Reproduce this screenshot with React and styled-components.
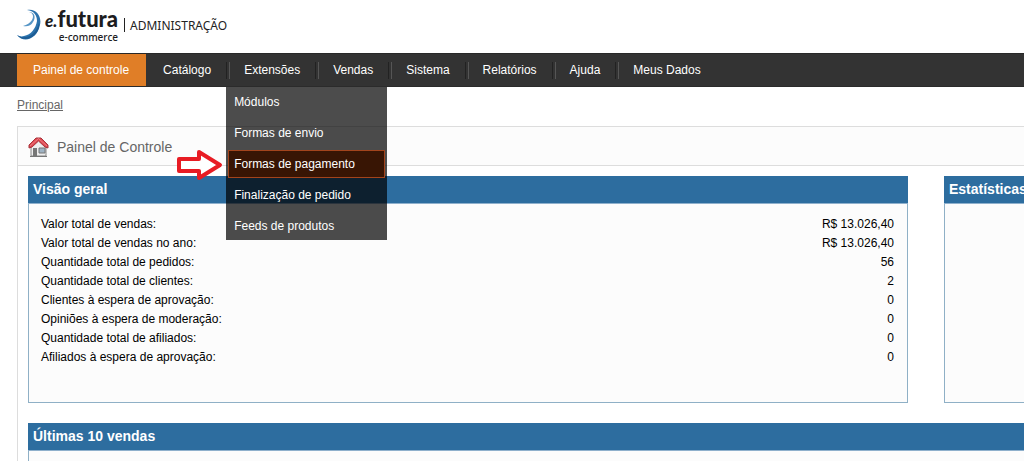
import styled, { createGlobalStyle } from "styled-components";

const GlobalStyle = createGlobalStyle`
  * {
    box-sizing: border-box;
  }
  body {
    margin: 0;
    background: #fff;
    color: #000;
    font-family: "Liberation Sans", Arial, sans-serif;
    font-size: 12px;
    overflow-x: hidden;
  }
  ul {
    list-style: none;
    margin: 0;
    padding: 0;
  }
`;

const Header = styled.header`
  display: flex;
  height: 53px;
  padding: 8px 16px;
  font-family: "Noto Sans", sans-serif;
`;

const Brand = styled.div`
  display: flex;
  color: #1d1d1f;
`;

const Swirl = styled.svg`
  width: 26px;
  height: 34px;
`;

const BrandText = styled.div`
  display: flex;
  flex-direction: column;
  align-items: flex-end;
  padding-left: 3px;
`;

const BrandName = styled.div`
  font-family: Lato, sans-serif;
  font-size: 22px;
  line-height: 22px;
  font-weight: 900;
  i {
    font-size: 17px;
  }
`;

const BrandSub = styled.div`
  font-size: 10px;
  line-height: 11px;
  font-weight: 500;
`;

const AdminLabel = styled.div`
  display: flex;
  align-items: center;
  height: 34px;
  padding-left: 6px;
  color: #222;
  font-size: 12px;
  &::before {
    content: "";
    height: 14px;
    margin-right: 5px;
    border-left: 1px solid #222;
  }
`;

const Nav = styled.nav`
  background: #333;
  border-top: 1px solid #282828;
  border-bottom: 1px solid #2b2b2b;
  padding-left: 17px;
`;

const NavList = styled.ul`
  display: flex;
  height: 32px;
`;

const NavLink = styled.a`
  padding: 0 15px 0 16px;
  color: #fff;
  line-height: 34px;
  text-decoration: none;
  white-space: nowrap;
`;

const NavItem = styled.li`
  position: relative;
  display: flex;
  align-items: center;
  background: ${(props) => (props.$active ? "#e07e27" : "none")};
  &:first-child {
    margin-right: 1px;
  }
  &:first-child ${NavLink} {
    padding-right: 17px;
  }
  &:nth-child(n + 3)::before {
    content: "";
    width: 2px;
    height: 17px;
    margin-right: -2px;
    border-left: 1px solid #222;
    border-right: 1px solid #555;
  }
`;

const Dropdown = styled.ul`
  position: absolute;
  top: 33px;
  left: 0;
  z-index: 2;
  display: flex;
  flex-direction: column;
  gap: 3px;
  width: 161px;
  padding: 1px 2px 0;
  background: rgba(0, 0, 0, 0.7);
`;

const DropdownItem = styled.li`
  position: relative;
`;

const DropdownLink = styled.a`
  display: block;
  padding: 0 5px;
  border: 1px solid ${(props) => (props.$selected ? "#a3441c" : "transparent")};
  background: ${(props) => (props.$selected ? "#381504" : "none")};
  color: #fff;
  line-height: 26px;
  text-decoration: none;
`;

const Arrow = styled.svg`
  position: absolute;
  top: -2px;
  right: 100%;
  width: 52px;
  height: 34px;
`;

const Breadcrumb = styled.div`
  padding: 10px 17px;
  height: 39px;
  line-height: 16px;
  a {
    color: #666;
  }
`;

const Content = styled.main`
  min-width: 1818px;
  margin-left: 17px;
  border: 1px solid #ddd;
`;

const Heading = styled.div`
  display: flex;
  align-items: center;
  gap: 8px;
  height: 39px;
  padding: 2px 10px 0;
  border-bottom: 1px solid #ddd;
  background: #fcfcfc;
`;

const HouseIcon = styled.svg`
  width: 21px;
  height: 22px;
`;

const Title = styled.h1`
  margin: 0;
  color: #666;
  font-size: 14px;
  font-weight: normal;
`;

const Panels = styled.div`
  display: grid;
  grid-template-columns: 1fr 1fr;
  gap: 20px 36px;
  padding: 10px;
`;

const Panel = styled.section`
  grid-column: ${(props) => (props.$wide ? "1 / -1" : "auto")};
  border: 1px solid #8fb0c6;
  border-top: 0;
  background: #fcfcfc;
`;

const PanelTitle = styled.h2`
  margin: 0 -1px;
  padding: 0 5px;
  border-bottom: 1px solid #8fb0cc;
  background: #2d6d9f;
  color: #fff;
  font-size: 14px;
  line-height: 27px;
`;

const PanelBody = styled.div`
  min-height: 198px;
  padding: 11px 13px 11px 12px;
`;

const Stats = styled.table`
  width: 100%;
  border-collapse: collapse;
  line-height: 19px;
  th {
    padding: 0;
    font-weight: normal;
    text-align: left;
  }
  td {
    padding: 0;
    text-align: right;
  }
`;

const menu = [
  { label: "Painel de controle", active: true },
  { label: "Catálogo" },
  {
    label: "Extensões",
    items: [
      "Módulos",
      "Formas de envio",
      "Formas de pagamento",
      "Finalização de pedido",
      "Feeds de produtos",
    ],
  },
  { label: "Vendas" },
  { label: "Sistema" },
  { label: "Relatórios" },
  { label: "Ajuda" },
  { label: "Meus Dados" },
];

const stats = [
  ["Valor total de vendas:", "R$ 13.026,40"],
  ["Valor total de vendas no ano:", "R$ 13.026,40"],
  ["Quantidade total de pedidos:", "56"],
  ["Quantidade total de clientes:", "2"],
  ["Clientes à espera de aprovação:", "0"],
  ["Opiniões à espera de moderação:", "0"],
  ["Quantidade total de afiliados:", "0"],
  ["Afiliados à espera de aprovação:", "0"],
];

const selected = "Formas de pagamento";

function Logo() {
  return (
    <Brand>
      <Swirl viewBox="0 0 26 34" aria-hidden="true">
        <path d="M11 2C20 0 26 8 24 17C21 31 8 36 1 27C3 28 5 29 8 28C15 27 20 20 21 13C21 7 18 3 11 2Z" fill="#2b73ad" />
        <path d="M1 27C9 33 20 27 23 15C25 27 9 37 1 27Z" fill="#1d5c94" />
        <path d="M13 4C19 4 20 10 17 14C15 18 11 19 7 18C11 17 14 15 16 12C18 8 17 5 13 4Z" fill="#5796c6" />
      </Swirl>
      <BrandText>
        <BrandName>
          <i>e.</i>futura
        </BrandName>
        <BrandSub>e-commerce</BrandSub>
      </BrandText>
    </Brand>
  );
}

function House() {
  return (
    <HouseIcon viewBox="0 0 21 22" aria-hidden="true">
      <path d="M3 10L10.500 4L18 10V20H3Z" fill="#efefef" stroke="#888" />
      <path d="M5 12h4v8H5z" fill="#777" />
      <path d="M11 12h6v5h-6z" fill="#9fb3c4" stroke="#777" />
      <path d="M2 20.500H19" stroke="#777" />
      <path d="M1 9L8 2H13L20 9V12L17 11L10.500 5L4 11L1 12Z" fill="#dd4750" stroke="#a8353c" />
      <path d="M2 10L10.500 2.500L19 10" fill="none" stroke="#ef8085" />
    </HouseIcon>
  );
}

export default function App() {
  return (
    <>
      <GlobalStyle />
      <Header>
        <Logo />
        <AdminLabel>ADMINISTRAÇÃO</AdminLabel>
      </Header>
      <Nav>
        <NavList>
          {menu.map((entry) => (
            <NavItem key={entry.label} $active={entry.active}>
              <NavLink href="#">{entry.label}</NavLink>
              {entry.items && (
                <Dropdown>
                  {entry.items.map((item) => (
                    <DropdownItem key={item}>
                      <DropdownLink href="#" $selected={item === selected}>
                        {item}
                      </DropdownLink>
                      {item === selected && (
                        <Arrow viewBox="0 0 52 34" aria-hidden="true">
                          <path d="M3 11H23V4L44 17L23 30V23H3Z" fill="#fff" stroke="#e81c24" strokeWidth="4" strokeLinejoin="round" />
                        </Arrow>
                      )}
                    </DropdownItem>
                  ))}
                </Dropdown>
              )}
            </NavItem>
          ))}
        </NavList>
      </Nav>
      <Breadcrumb>
        <a href="#">Principal</a>
      </Breadcrumb>
      <Content>
        <Heading>
          <House />
          <Title>Painel de Controle</Title>
        </Heading>
        <Panels>
          <Panel>
            <PanelTitle>Visão geral</PanelTitle>
            <PanelBody>
              <Stats>
                <tbody>
                  {stats.map(([label, value]) => (
                    <tr key={label}>
                      <th scope="row">{label}</th>
                      <td>{value}</td>
                    </tr>
                  ))}
                </tbody>
              </Stats>
            </PanelBody>
          </Panel>
          <Panel>
            <PanelTitle>Estatísticas</PanelTitle>
          </Panel>
          <Panel $wide>
            <PanelTitle>Últimas 10 vendas</PanelTitle>
            <PanelBody />
          </Panel>
        </Panels>
      </Content>
    </>
  );
}
